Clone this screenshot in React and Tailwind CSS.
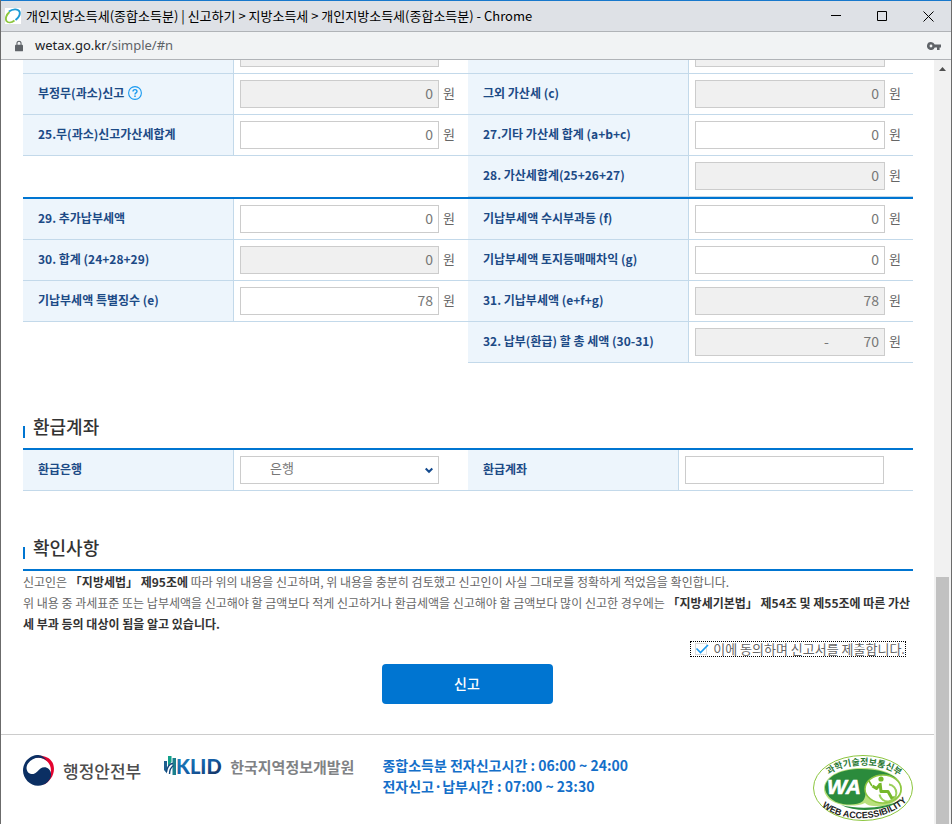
import React, { useState } from "react";

const leftTop = [
  { label: "부정무(과소)신고", value: "0", readOnly: true, help: true },
  { label: "25.무(과소)신고가산세합계", value: "0" },
];

const rightTop = [
  { label: "그외 가산세 (c)", value: "0", readOnly: true },
  { label: "27.기타 가산세 합계 (a+b+c)", value: "0" },
  { label: "28. 가산세합계(25+26+27)", value: "0", readOnly: true },
];

const leftBottom = [
  { label: "29. 추가납부세액", value: "0" },
  { label: "30. 합계 (24+28+29)", value: "0", readOnly: true },
  { label: "기납부세액 특별징수 (e)", value: "78" },
];

const rightBottom = [
  { label: "기납부세액 수시부과등 (f)", value: "0" },
  { label: "기납부세액 토지등매매차익 (g)", value: "0" },
  { label: "31. 기납부세액 (e+f+g)", value: "78", readOnly: true },
  { label: "32. 납부(환급) 할 총 세액 (30-31)", value: "-" + "\u00a0".repeat(11) + "70", readOnly: true },
];

const HelpIcon = () => (
  <svg width="14" height="14" viewBox="0 0 14 14" fill="none" stroke="#1a9af0" aria-hidden="true">
    <circle cx="7" cy="7" r="6.4" strokeWidth="1.1" />
    <path d="M5 5.6C5 4.3 5.9 3.6 7 3.6s2 .7 2 1.8c0 1.5-2 1.5-2 3" strokeWidth="1.4" />
    <path d="M7 9.5v1.4" strokeWidth="1.5" />
  </svg>
);

const AmountTable = ({ rows, wide, clipped }) => (
  <table className="w-full table-fixed border-separate border-spacing-0">
    <colgroup>
      <col className={wide ? "w-[221px]" : "w-[211px]"} />
      <col />
    </colgroup>
    <tbody>
      {clipped && (
        <tr className="h-[14px]">
          <th className="border-r border-b border-[#c3d9ea] bg-[#edf5fc] p-0" />
          <td className="border-b border-[#c3d9ea] p-0 pl-1.5 align-top">
            <div className={`h-[7px] border border-t-0 border-[#ccc] bg-[#f0f0f0] ${wide ? "mr-7" : "mr-[29px]"}`} />
          </td>
        </tr>
      )}
      {rows.map((row) => (
        <tr key={row.label} className="h-[41px]">
          <th className="border-r border-b border-[#c3d9ea] bg-[#edf5fc] p-0 pb-0.5 pl-[15px] text-left text-xs font-bold text-[#1c4a86]">
            <div className="flex items-center gap-1">
              <label htmlFor={row.label}>{row.label}</label>
              {row.help && (
                <button type="button" aria-label="도움말">
                  <HelpIcon />
                </button>
              )}
            </div>
          </th>
          <td className="border-b border-[#c3d9ea] p-0 pl-1.5">
            <div className={`flex items-center gap-1 ${wide ? "pr-3" : "pr-[13px]"}`}>
              <input
                id={row.label}
                type="text"
                defaultValue={row.value}
                readOnly={row.readOnly}
                className={`h-7 min-w-0 flex-1 border border-[#ccc] px-[5px] pb-0.5 text-right text-sm text-[#777] ${row.readOnly ? "bg-[#f0f0f0]" : "bg-white"}`}
              />
              <span className="w-3 pb-0.5 text-[13px] text-[#666]">원</span>
            </div>
          </td>
        </tr>
      ))}
    </tbody>
  </table>
);

const SectionTitle = ({ children }) => (
  <div className="flex h-[34px] items-start gap-2 border-b-2 border-[#0075d1]">
    <span className="mt-2.5 h-3 w-0.5 bg-[#0075d1]" />
    <h3 className="text-lg leading-5 font-medium text-[#333]">{children}</h3>
  </div>
);

const Favicon = () => (
  <svg width="16" height="16" viewBox="0 0 16 16" fill="none" aria-hidden="true">
    <rect width="16" height="16" fill="#fff" />
    <path d="M4 3.6C7.5.8 13 .6 14.5 3.5 15.5 6.500 13 10 10.500 12" stroke="#1c9ad6" strokeWidth="1.9" />
    <path d="M4.500 4C1.500 6.500 0 10.500 1.500 13c1.500 2 5 1.700 8-.5" stroke="#8cc63f" strokeWidth="1.9" />
  </svg>
);

const TitleBar = () => (
  <header className="flex h-[31px] shrink-0 items-center border-t border-[#1878cc] bg-[#dee1e6] pl-1 text-black">
    <Favicon />
    <h1 className="ml-[5px] flex-1 text-[13px] whitespace-nowrap">
      개인지방소득세(종합소득분) | 신고하기 &gt; 지방소득세 &gt; 개인지방소득세(종합소득분) - Chrome
    </h1>
    <div className="flex">
      <button type="button" aria-label="최소화" className="flex w-[46px] justify-center">
        <svg width="11" height="11" viewBox="0 0 11 11" stroke="currentColor"><path d="M0 4.500h10" /></svg>
      </button>
      <button type="button" aria-label="최대화" className="flex w-[46px] justify-center">
        <svg width="11" height="11" viewBox="0 0 11 11" fill="none" stroke="currentColor"><path d="M.5.5h9v9h-9z" /></svg>
      </button>
      <button type="button" aria-label="닫기" className="flex w-[46px] justify-center">
        <svg width="11" height="11" viewBox="0 0 11 11" stroke="currentColor"><path d="M.5.5l10 10M10.500.5l-10 10" /></svg>
      </button>
    </div>
  </header>
);

const AddressBar = () => (
  <div className="flex h-[29px] shrink-0 items-center border-y border-[#b0b3b7] bg-[#f1f3f4] pr-2.5 pl-3.5">
    <svg width="8" height="12" viewBox="0 0 9 12" fill="#5f6368" aria-hidden="true">
      <rect y="4.500" width="9" height="7.500" rx="1" />
      <path d="M2.200 5V3a2.300 2.300 0 014.600 0v2" fill="none" stroke="#5f6368" strokeWidth="1.200" />
    </svg>
    <p className="ml-3 flex-1 font-['Noto_Sans','Noto_Sans_CJK_KR',sans-serif] text-[13px] text-[#5f6368]">
      <span className="text-[#202124]">wetax.go.kr</span>/simple/#n
    </p>
    <button type="button" aria-label="비밀번호">
      <svg width="14" height="8" viewBox="0 0 14 8" fill="#5f6368">
        <path fillRule="evenodd" d="M4 0a4 4 0 103.700 5.400H10V8h2.600V5.400H14V2.600H7.700A4 4 0 004 0zm0 2.600a1.400 1.400 0 110 2.800 1.400 1.400 0 010-2.800z" />
      </svg>
    </button>
  </div>
);

const MoisLogo = () => (
  <div className="flex items-center gap-2">
    <svg width="32" height="31" viewBox="0 0 32 31" aria-hidden="true">
      <path d="M6 4.500C12-1 25-1 29.500 7.500 33.500 16 29 26 20 30 27 24 29.500 17 27 10.500 23 2 12 1 6 4.500z" fill="#e4032e" />
      <path d="M14 0C6 .8 0 7.500 0 15.500S7 30.800 15 30.800c8 0 13.500-6 13-12-.5-6-6.500-8.300-10.500-5.300C14 16.500 12.500 19.500 8.500 19 3.500 18.500 2.200 12.500 5 8.500 8.500 3.200 15 1.800 20 3.500 22 4 23 5 24 5.800 21.500 2 18-.3 14 0z" fill="#0b2f63" />
    </svg>
    <span className="text-[17px] leading-6 font-medium text-[#4d4d4d]">행정안전부</span>
  </div>
);

const KlidLogo = () => (
  <div className="flex items-center gap-1">
    <svg width="62" height="24" viewBox="0 0 62 24" role="img" aria-label="KLID">
      <defs>
        <linearGradient id="klid" x1="0" y1="0" x2="1" y2="1">
          <stop offset="0" stopColor="#1d8cc0" />
          <stop offset=".5" stopColor="#1560a8" />
          <stop offset="1" stopColor="#14264f" />
        </linearGradient>
      </defs>
      <path d="M0 6h3v12.500L0 15z" fill="#1d5f8f" />
      <path d="M4 1h3.500v6L4 11z" fill="#12a08a" />
      <path d="M8.500 3H12v17H8.500z" fill="#1c7f8c" />
      <path d="M2.500 17C3.500 11 6 8.500 9 8.500M5.500 19c0-4 1-6.500 4-8.500" stroke="#12477d" strokeWidth="1.400" fill="none" />
      <text x="12" y="19" fontSize="20" fontWeight="900" fontFamily="Lato, sans-serif" fill="url(#klid)">KLID</text>
    </svg>
    <span className="text-[15px] leading-6 font-bold text-[#808285]">한국지역정보개발원</span>
  </div>
);

const WebAccessibilityMark = () => (
  <svg width="100" height="66" viewBox="0 0 100 66" role="img" aria-label="WEB ACCESSIBILITY">
    <defs>
      <path id="wa-top" d="M14 22C28 6 72 6 88 23" />
      <path id="wa-bottom" d="M8 50C26 68 72 69 95 45" />
    </defs>
    <ellipse cx="50" cy="33" rx="49.500" ry="32.500" fill="#fff" stroke="#8cc63f" />
    <path d="M11 32C13 20 29 13 50 13s38 8 39 20-14 20-28 18c-4 0-7-1-9-3-6 3-14 3-22 2-12-2-20-9-19-18z" fill="#b9e07c" />
    <path d="M12 32C14 21 28 14 48 14c17 0 30 4 36 10-9-4-22-4-28 3-4 6-2 14-6 19-5 4-13 4-20 3-11-2-18-9-18-17z" fill="#2b8b3c" />
    <ellipse cx="70" cy="34" rx="18" ry="14" fill="#fff" stroke="#8cc63f" strokeWidth="1.500" />
    <path d="M28 50c20 5 46 3 62-6-13 11-44 15-62 6z" fill="#2b8b3c" />
    <circle cx="68" cy="24" r="2.600" fill="#76b82a" />
    <path d="M67 28l1 8.500h7l4 7 3-1M67 29.500l-3.500 4-4-2.500" fill="none" stroke="#76b82a" strokeWidth="3" strokeLinejoin="round" />
    <path d="M56 26l3 5" stroke="#76b82a" strokeWidth="1.500" />
    <path d="M76 29.500a8.500 8.500 0 11-9.500 10" fill="none" stroke="#9bd05a" strokeWidth="2" />
    <text x="14" y="39" fontSize="21" fontWeight="700" fontStyle="italic" fontFamily="Liberation Sans, sans-serif" fill="#fff" stroke="#fff" strokeWidth=".6">WA</text>
    <text fontSize="9" fontWeight="700" fontFamily="Noto Sans CJK KR, sans-serif" fill="#2b7a35">
      <textPath href="#wa-top" startOffset="50%" textAnchor="middle">과학기술정보통신부</textPath>
    </text>
    <text fontSize="9" fontWeight="700" fontFamily="Liberation Sans, sans-serif" fill="#222">
      <textPath href="#wa-bottom" startOffset="50%" textAnchor="middle">WEB ACCESSIBILITY</textPath>
    </text>
  </svg>
);

const ScrollBar = () => (
  <div className="flex w-[17px] shrink-0 flex-col items-center bg-[#f1f1f1]" aria-hidden="true">
    <svg width="17" height="17" viewBox="0 0 17 17" fill="#505050"><path d="M8.500 7l3.500 4H5z" /></svg>
    <div className="flex-[500]" />
    <div className="w-[13px] flex-[247] bg-[#c1c1c1]" />
  </div>
);

const App = () => {
  const [agree, setAgree] = useState(true);

  return (
    <div className="flex h-screen flex-col overflow-hidden border-x border-[#6b6b6b] bg-white font-['Noto_Sans_CJK_KR','Noto_Sans',sans-serif]">
      <TitleBar />
      <AddressBar />
      <div className="flex min-h-0 flex-1">
        <div className="min-w-0 flex-1 overflow-hidden">
          <main className="pr-[21px] pl-[22px]">
            <div className="grid grid-cols-2 items-start border-b-2 border-[#0075d1]">
              <AmountTable rows={leftTop} clipped />
              <AmountTable rows={rightTop} wide clipped />
            </div>
            <div className="grid grid-cols-2 items-start">
              <AmountTable rows={leftBottom} />
              <AmountTable rows={rightBottom} wide />
            </div>

            <section className="mt-[53px]">
              <SectionTitle>환급계좌</SectionTitle>
              <table className="w-full table-fixed border-separate border-spacing-0">
                <colgroup>
                  <col className="w-[211px]" />
                  <col />
                  <col className="w-[211px]" />
                  <col />
                </colgroup>
                <tbody>
                  <tr className="h-[41px] text-left text-xs text-[#1c4a86]">
                    <th className="border-r border-b border-[#c3d9ea] bg-[#edf5fc] p-0 pb-0.5 pl-[15px]">
                      <label htmlFor="bank">환급은행</label>
                    </th>
                    <td className="border-b border-[#c3d9ea] p-0 pr-[29px] pl-1.5">
                      <div className="grid items-center">
                        <select id="bank" className="col-start-1 row-start-1 h-7 w-full appearance-none border border-[#ccc] bg-white pb-1 pl-[29px] text-[13px] text-[#777]">
                          <option>은행</option>
                        </select>
                        <svg width="8" height="7" viewBox="0 0 8 7" className="pointer-events-none col-start-1 row-start-1 mr-1.5 justify-self-end" fill="none" stroke="#134a8e" strokeWidth="2" aria-hidden="true">
                          <path d="M.7 1.500L4 4.800l3.300-3.300" />
                        </svg>
                      </div>
                    </td>
                    <th className="border-r border-b border-[#c3d9ea] bg-[#edf5fc] p-0 pb-0.5 pl-[15px]">
                      <label htmlFor="account">환급계좌</label>
                    </th>
                    <td className="border-b border-[#c3d9ea] p-0 pr-[29px] pl-1.5">
                      <input id="account" type="text" className="block h-7 w-full border border-[#ccc] bg-white px-[5px] text-sm text-[#777]" />
                    </td>
                  </tr>
                </tbody>
              </table>
            </section>

            <section className="mt-[46px]">
              <SectionTitle>확인사항</SectionTitle>
              <p className="text-xs leading-[21px] whitespace-nowrap text-[#666]">
                신고인은 <b className="text-[#333]">「지방세법」 제95조에</b> 따라 위의 내용을 신고하며, 위 내용을 충분히 검토했고 신고인이 사실 그대로를 정확하게 적었음을 확인합니다.
                <br />
                위 내용 중 과세표준 또는 납부세액을 신고해야 할 금액보다 적게 신고하거나 환급세액을 신고해야 할 금액보다 많이 신고한 경우에는{" "}
                <b className="text-[#333]">
                  「지방세기본법」 제54조 및 제55조에 따른 가산
                  <br />
                  세 부과 등의 대상이 됨을 알고 있습니다.
                </b>
              </p>
              <div className="mt-[7px] flex justify-end pr-[7px]">
                <label className="flex h-4 items-center gap-1 border border-dotted border-black pl-1 text-[13px] text-[#666]">
                  <span className="grid">
                    <input
                      type="checkbox"
                      checked={agree}
                      onChange={(e) => setAgree(e.target.checked)}
                      className="col-start-1 row-start-1 size-3 appearance-none border border-[#ddd]"
                    />
                    {agree && (
                      <svg width="14" height="12" viewBox="0 0 14 12" className="pointer-events-none col-start-1 row-start-1" fill="none" stroke="#1a9af0" strokeWidth="1.600" aria-hidden="true">
                        <path d="M1.500 5.500l4 4L13 2" />
                      </svg>
                    )}
                  </span>
                  이에 동의하며 신고서를 제출합니다.
                </label>
              </div>
              <div className="mt-[7px] flex justify-center pr-0.5">
                <button type="button" className="h-10 w-[171px] rounded bg-[#0075d1] pb-0.5 text-sm font-medium text-white">
                  신고
                </button>
              </div>
            </section>
          </main>

          <footer className="mt-[30px] flex items-start border-t border-[#ccc] pt-5 pr-[21px] pl-[22px]">
            <MoisLogo />
            <div className="ml-[23px]">
              <KlidLogo />
            </div>
            <p className="ml-7 text-sm leading-[21px] font-bold text-[#146fc9]">
              종합소득분 전자신고시간 : 06:00 ~ 24:00
              <br />
              전자신고·납부시간 : 07:00 ~ 23:30
            </p>
            <div className="ml-auto">
              <WebAccessibilityMark />
            </div>
          </footer>
        </div>
        <ScrollBar />
      </div>
    </div>
  );
};

export default App;
